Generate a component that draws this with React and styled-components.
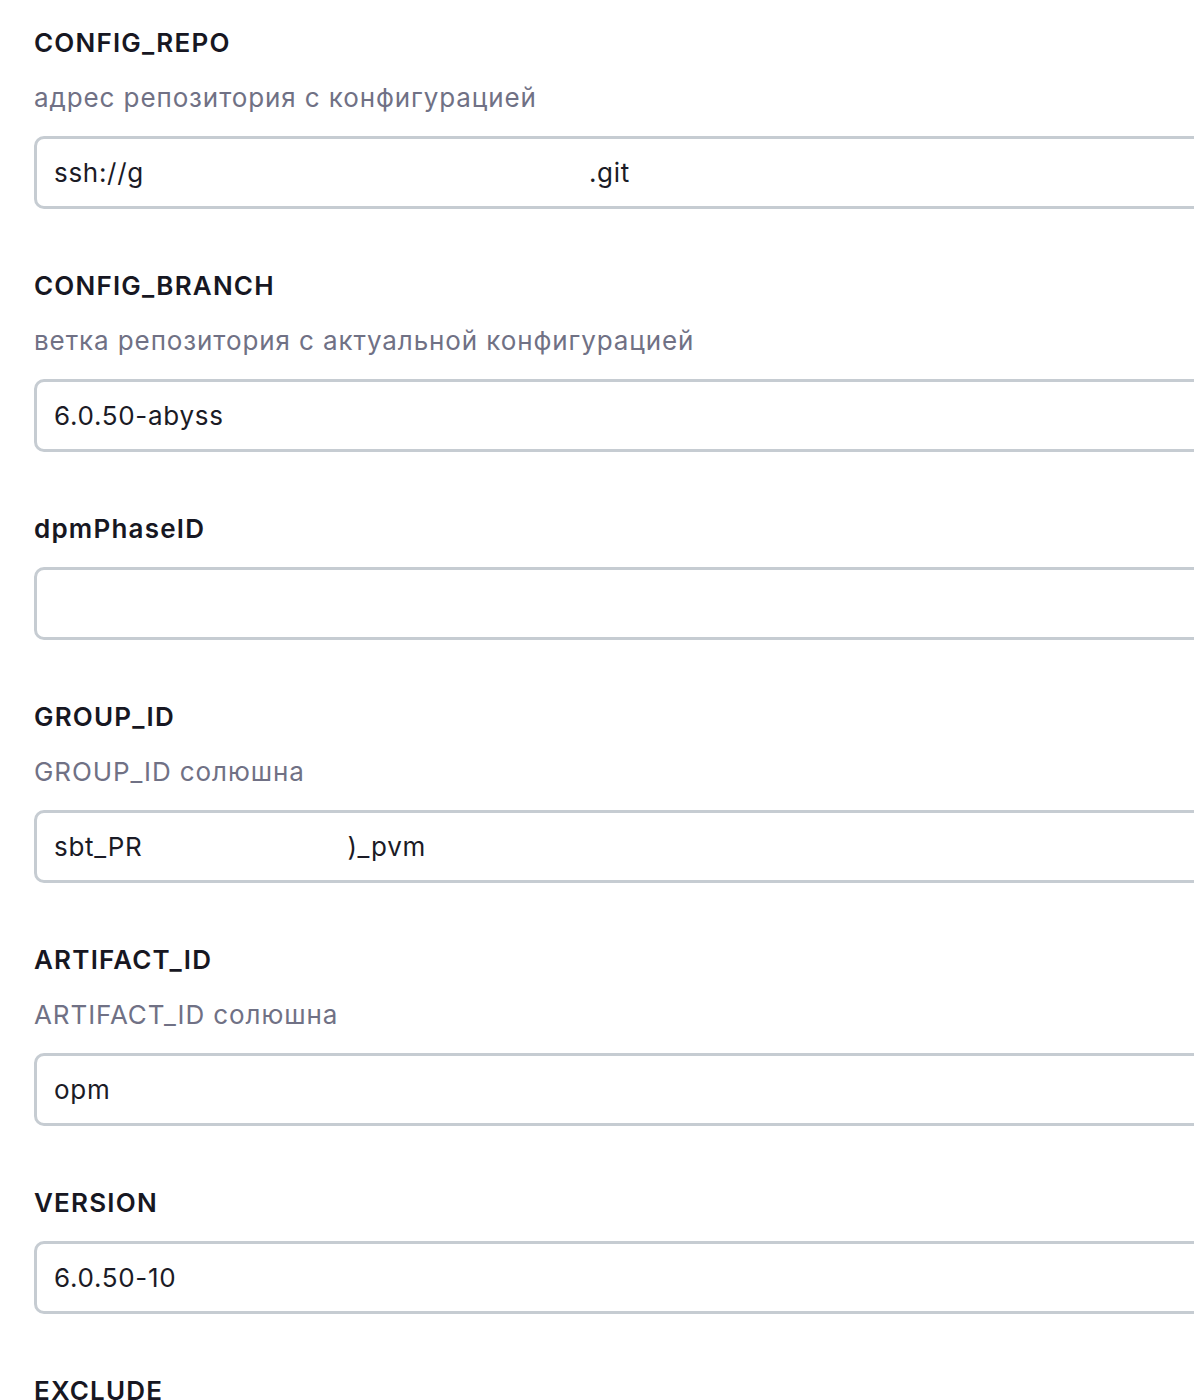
import React from "react";
import styled, { createGlobalStyle } from "styled-components";

const Global = createGlobalStyle`
  html, body { margin: 0; padding: 0; background: #ffffff; overflow-x: hidden; }
  body { font-family: Inter, "Noto Sans", "Liberation Sans", sans-serif; }
`;

const Page = styled.div`
  padding: 26px 0 0 34px;
  display: flex;
  flex-direction: column;
  gap: 60px;
  width: 1300px;
`;

const Field = styled.div`
  display: flex;
  flex-direction: column;
  gap: 21px;
`;

const Label = styled.div`
  font-size: 26px;
  line-height: 34px;
  font-weight: 600;
  color: #171722;
  letter-spacing: 1.2px;
`;

const Desc = styled.div`
  font-size: 26px;
  line-height: 34px;
  font-weight: 400;
  color: #707185;
  letter-spacing: 0.9px;
`;

const Input = styled.div`
  box-sizing: border-box;
  height: 73px;
  width: 1250px;
  border: 3px solid #c6ccd2;
  border-radius: 10px;
  padding: 0 17px;
  display: flex;
  align-items: center;
  font-size: 26px;
  letter-spacing: 0.7px;
  color: #1b1b26;
  white-space: pre;
`;

const Mask = styled.span`
  display: inline-block;
  width: ${(p) => p.$w}px;
`;

const fields = [
  { label: "CONFIG_REPO", desc: "адрес репозитория с конфигурацией", value: ["ssh://g", 445, ".git"] },
  { label: "CONFIG_BRANCH", desc: "ветка репозитория с актуальной конфигурацией", value: ["6.0.50-abyss"] },
  { label: "dpmPhaseID", value: [""] },
  { label: "GROUP_ID", desc: "GROUP_ID солюшна", value: ["sbt_PR", 205, ")_pvm"] },
  { label: "ARTIFACT_ID", desc: "ARTIFACT_ID солюшна", value: ["opm"] },
  { label: "VERSION", value: ["6.0.50-10"] },
  { label: "EXCLUDE", value: null },
];

export default function App() {
  return (
    <>
      <Global />
      <Page>
        {fields.map((f) => (
          <Field key={f.label}>
            <Label>{f.label}</Label>
            {f.desc && <Desc>{f.desc}</Desc>}
            {f.value && (
              <Input>
                {f.value.map((v, i) =>
                  typeof v === "number" ? <Mask key={i} $w={v} /> : <span key={i}>{v}</span>
                )}
              </Input>
            )}
          </Field>
        ))}
      </Page>
    </>
  );
}
